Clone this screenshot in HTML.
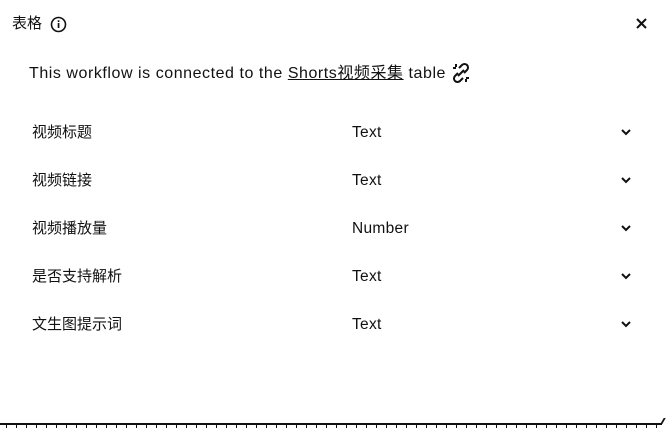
<!DOCTYPE html>
<html><head><meta charset="utf-8"><style>
body{margin:0;width:668px;height:434px;background:#fff;position:relative;overflow:hidden;font-family:"Liberation Sans","Noto Sans CJK SC",sans-serif;color:#111}
.a{position:absolute;white-space:nowrap}
.row{position:absolute;left:0;width:668px;height:20px;font-size:15px;line-height:20px}
.row span{line-height:20px;display:block}
.row .l{position:absolute;left:32px;top:0}
.row .t{position:absolute;left:352px;top:0;font-size:15.5px;letter-spacing:0.3px}
.row svg{position:absolute;left:620px;top:4px}
</style></head><body>
<div class="a" style="left:12px;top:14px;font-size:15px;line-height:20px">表格</div>
<svg class="a" style="left:50px;top:16px" width="17" height="17" viewBox="0 0 17 17"><circle cx="8.5" cy="8.5" r="7" fill="none" stroke="#111" stroke-width="1.6"/><rect x="7.7" y="7" width="1.7" height="5" fill="#111"/><rect x="7.7" y="4.3" width="1.7" height="1.7" fill="#111"/></svg>
<svg class="a" style="left:635px;top:17px" width="13" height="13" viewBox="0 0 13 13"><path d="M2 2L11 11M11 2L2 11" stroke="#111" stroke-width="2"/></svg>
<div class="a" style="left:29px;top:64px;font-size:16px;line-height:20px;letter-spacing:0.55px">This workflow is connected to the <span style="text-decoration:underline">Shorts视频采集</span> table</div>
<svg class="a" style="left:450px;top:62px" width="22" height="22" viewBox="0 0 22 22" fill="none" stroke="#111" stroke-width="2"><path d="M9 6l3-3a3.5 3.5 0 0 1 5 5l-3 3M13 16l-3 3a3.5 3.5 0 0 1-5-5l3-3M8 14l6-6M3 6h3M6 2v3M19 16h-3M16 20v-3"/></svg>
<div class="row" style="top:123px"><span class="l">视频标题</span><span class="t">Text</span><svg width="12" height="10" viewBox="0 0 12 10"><path d="M2 3l4 4 4-4" stroke="#111" stroke-width="2" fill="none"/></svg></div>
<div class="row" style="top:171px"><span class="l">视频链接</span><span class="t">Text</span><svg width="12" height="10" viewBox="0 0 12 10"><path d="M2 3l4 4 4-4" stroke="#111" stroke-width="2" fill="none"/></svg></div>
<div class="row" style="top:219px"><span class="l">视频播放量</span><span class="t">Number</span><svg width="12" height="10" viewBox="0 0 12 10"><path d="M2 3l4 4 4-4" stroke="#111" stroke-width="2" fill="none"/></svg></div>
<div class="row" style="top:267px"><span class="l">是否支持解析</span><span class="t">Text</span><svg width="12" height="10" viewBox="0 0 12 10"><path d="M2 3l4 4 4-4" stroke="#111" stroke-width="2" fill="none"/></svg></div>
<div class="row" style="top:315px"><span class="l">文生图提示词</span><span class="t">Text</span><svg width="12" height="10" viewBox="0 0 12 10"><path d="M2 3l4 4 4-4" stroke="#111" stroke-width="2" fill="none"/></svg></div>
<div class="a" style="left:0;top:423px;width:662px;height:2px;background:#111"></div>
<div class="a" style="left:6px;top:425px;width:660px;height:3px;background:repeating-linear-gradient(90deg,#111 0 1px,transparent 1px 10px)"></div>
<div class="a" style="left:662px;top:418px;width:2px;height:6px;background:#111;transform:skewX(-30deg)"></div>
</body></html>
